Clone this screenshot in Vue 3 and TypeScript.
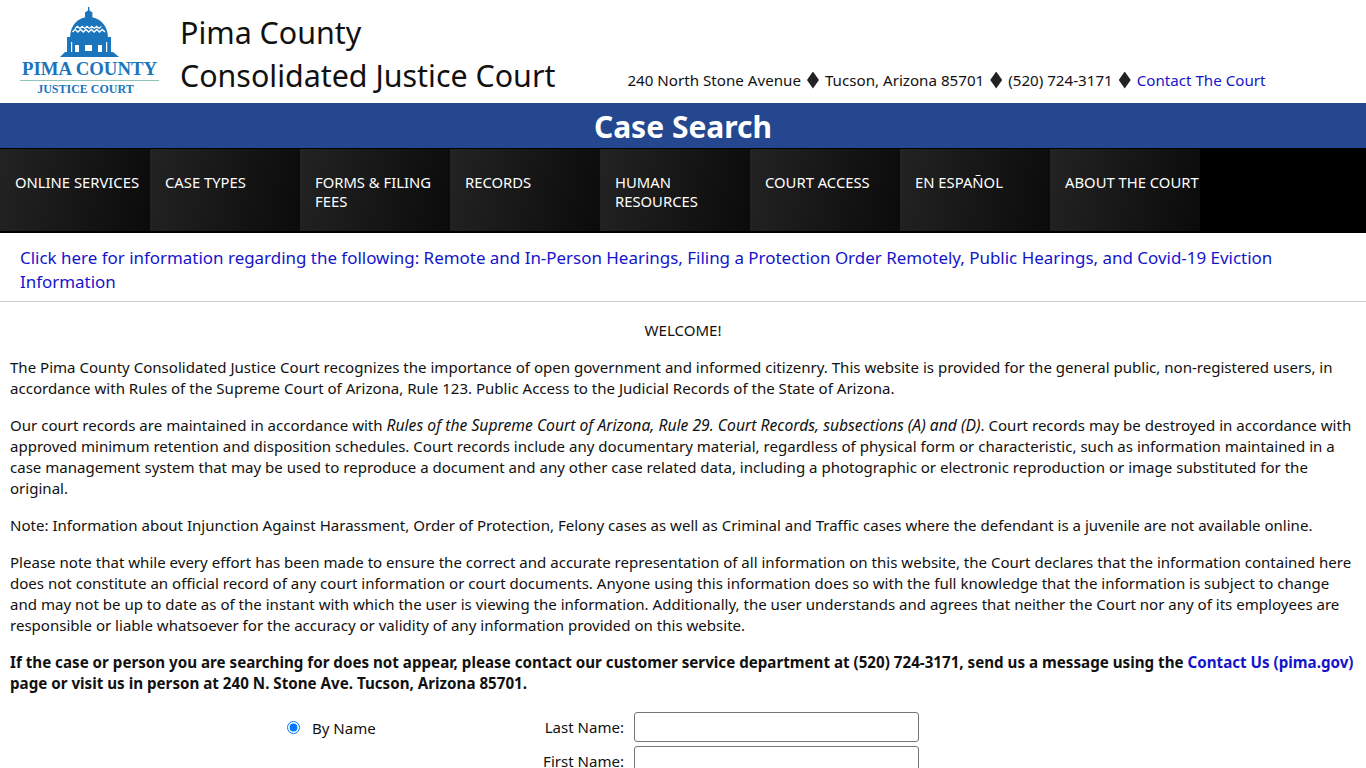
<script setup lang="ts">
const navItems: string[] = ['ONLINE SERVICES','CASE TYPES','FORMS & FILING FEES','RECORDS','HUMAN RESOURCES','COURT ACCESS','EN ESPAÑOL','ABOUT THE COURT']
</script>

<template>
  <div class="page">
    <header class="top">
      <div class="logo">
        <svg width="140" height="100" viewBox="20 0 140 100">
          <g fill="#1b75bc">
            <rect x="88" y="7" width="1.4" height="4"/>
            <path d="M85 17 V12.5 L88.7 10 L92.4 12.5 V17 Z"/>
            <path d="M70 38 C70 25 78 17.5 88.7 16.5 C99.5 17.5 108 25 108 38 Z"/>
            <path d="M67 37 H111 V52 H113 L119 57 H60 L65 52 H67 Z"/>
          </g>
          <path d="M72.5 32 l2.7-2.6 2.7 2.6 2.7-2.6 2.7 2.6 2.7-2.6 2.7 2.6 2.7-2.6 2.7 2.6 2.7-2.6 2.7 2.6 2.7-2.6 2.7 2.6" fill="none" stroke="#fff" stroke-width="1.4"/>
          <path d="M75 28.5 l2.4-2.2 2.4 2.2 2.4-2.2 2.4 2.2 2.4-2.2 2.4 2.2 2.4-2.2 2.4 2.2 2.4-2.2 2.4 2.2 2.4-2.2" fill="none" stroke="#fff" stroke-width="1.1"/>
          <g fill="#fff">
            <rect x="75" y="45" width="4" height="7"/><rect x="85" y="45" width="7" height="6"/><rect x="98" y="45" width="4" height="7"/>
            <rect x="71" y="42" width="1.2" height="10"/><rect x="106" y="42" width="1.2" height="10"/>
          </g>
          <text x="89.5" y="75" text-anchor="middle" class="logo-main">PIMA COUNTY</text>
          <rect x="20" y="80" width="139" height="1" fill="#8fc5b8"/>
          <text x="85.5" y="93" text-anchor="middle" class="logo-sub">JUSTICE COURT</text>
        </svg>
      </div>
      <div class="title">
        <div>Pima County</div>
        <div>Consolidated Justice Court</div>
      </div>
      <div class="address">
        <span>240 North Stone Avenue</span><i class="dia"></i><span>Tucson, Arizona 85701</span><i class="dia"></i><span>(520) 724-3171</span><i class="dia"></i><a href="#">Contact The Court</a>
      </div>
    </header>

    <div class="banner">Case Search</div>

    <nav class="nav">
      <a v-for="item in navItems" :key="item" href="#" class="nav-item">{{ item }}</a>
    </nav>

    <div class="notice">
      <a href="#">Click here for information regarding the following: Remote and In-Person Hearings, Filing a Protection Order Remotely, Public Hearings, and Covid-19 Eviction Information</a>
    </div>

    <main class="content">
      <p class="welcome">WELCOME!</p>
      <p>The Pima County Consolidated Justice Court recognizes the importance of open government and informed citizenry. This website is provided for the general public, non-registered users, in accordance with Rules of the Supreme Court of Arizona, Rule 123. Public Access to the Judicial Records of the State of Arizona.</p>
      <p>Our court records are maintained in accordance with <em>Rules of the Supreme Court of Arizona, Rule 29. Court Records, subsections (A) and (D)</em>. Court records may be destroyed in accordance with approved minimum retention and disposition schedules. Court records include any documentary material, regardless of physical form or characteristic, such as information maintained in a case management system that may be used to reproduce a document and any other case related data, including a photographic or electronic reproduction or image substituted for the original.</p>
      <p>Note: Information about Injunction Against Harassment, Order of Protection, Felony cases as well as Criminal and Traffic cases where the defendant is a juvenile are not available online.</p>
      <p>Please note that while every effort has been made to ensure the correct and accurate representation of all information on this website, the Court declares that the information contained here does not constitute an official record of any court information or court documents. Anyone using this information does so with the full knowledge that the information is subject to change and may not be up to date as of the instant with which the user is viewing the information. Additionally, the user understands and agrees that neither the Court nor any of its employees are responsible or liable whatsoever for the accuracy or validity of any information provided on this website.</p>
      <p class="bold">If the case or person you are searching for does not appear, please contact our customer service department at (520) 724-3171, send us a message using the <a href="#">Contact Us (pima.gov)</a> page or visit us in person at 240 N. Stone Ave. Tucson, Arizona 85701.</p>

      <form class="search" @submit.prevent>
        <label class="by"><input type="radio" name="by" checked /><span>By Name</span></label>
        <div class="fields">
          <label class="field"><span>Last Name:</span><input type="text" /></label>
          <label class="field"><span>First Name:</span><input type="text" /></label>
        </div>
      </form>
    </main>
  </div>
</template>

<style>
html, body { margin: 0; padding: 0; background: #fff; overflow: hidden; }
</style>

<style scoped>
.page { font-family: "Noto Sans", "Open Sans", sans-serif; color: #111; height: 768px; overflow: hidden; }
a { color: #1414cc; text-decoration: none; }
.top { height: 103px; display: flex; align-items: flex-start; }
.logo { width: 140px; margin-left: 20px; flex: none; }
.logo svg { display: block; }
.logo-main { font: bold 18.8px "Liberation Serif", serif; fill: #1b75bc; }
.logo-sub { font: bold 12px "Liberation Serif", serif; fill: #1b75bc; }
.title { margin: 11px 0 0 20px; font-size: 30.4px; line-height: 43px; flex: none; white-space: nowrap; }
.address { margin: 70px 0 0 72px; font-size: 15.15px; line-height: 20px; white-space: nowrap; display: flex; align-items: center; }
.dia { display: block; width: 12px; height: 17px; margin: 0 6px; background: #222; clip-path: polygon(50% 0, 100% 50%, 50% 100%, 0 50%); }
.banner { height: 45px; background: #24478f; color: #fff; font-size: 30px; font-weight: 700; text-align: center; line-height: 47px; }
.nav { display: flex; height: 85px; background: #000; }
.nav-item { width: 135px; height: 58px; margin: 1px 0; padding: 24px 0 0 15px; color: #fff; font-size: 14.8px; line-height: 19px; background: linear-gradient(100deg, #232323, #0b0b0b); }
.notice { height: 69px; border-bottom: 1px solid #ccc; box-sizing: border-box; padding: 13px 20px 0; font-size: 16.95px; line-height: 24px; }
.content { padding: 18px 10px 0; font-size: 15.05px; line-height: 21px; }
.content p { margin: 0 0 16px; }
.content em { font-size: 15.7px; }
.welcome { text-align: center; }
.bold { font-weight: 700; font-size: 15.17px; }
.search { display: flex; margin-top: 18px; }
.by { padding-left: 277px; width: 217px; display: flex; align-items: center; height: 30px; gap: 12px; flex: none; }
.by input { margin: 0; width: 13px; height: 13px; }
.by span { padding-top: 2px; }
.fields { display: flex; flex-direction: column; gap: 4px; }
.field { display: flex; align-items: center; }
.field span { width: 120px; text-align: right; }
.field input { width: 285px; height: 30px; box-sizing: border-box; border: 1px solid #767676; border-radius: 3px; margin-left: 10px; }
</style>
